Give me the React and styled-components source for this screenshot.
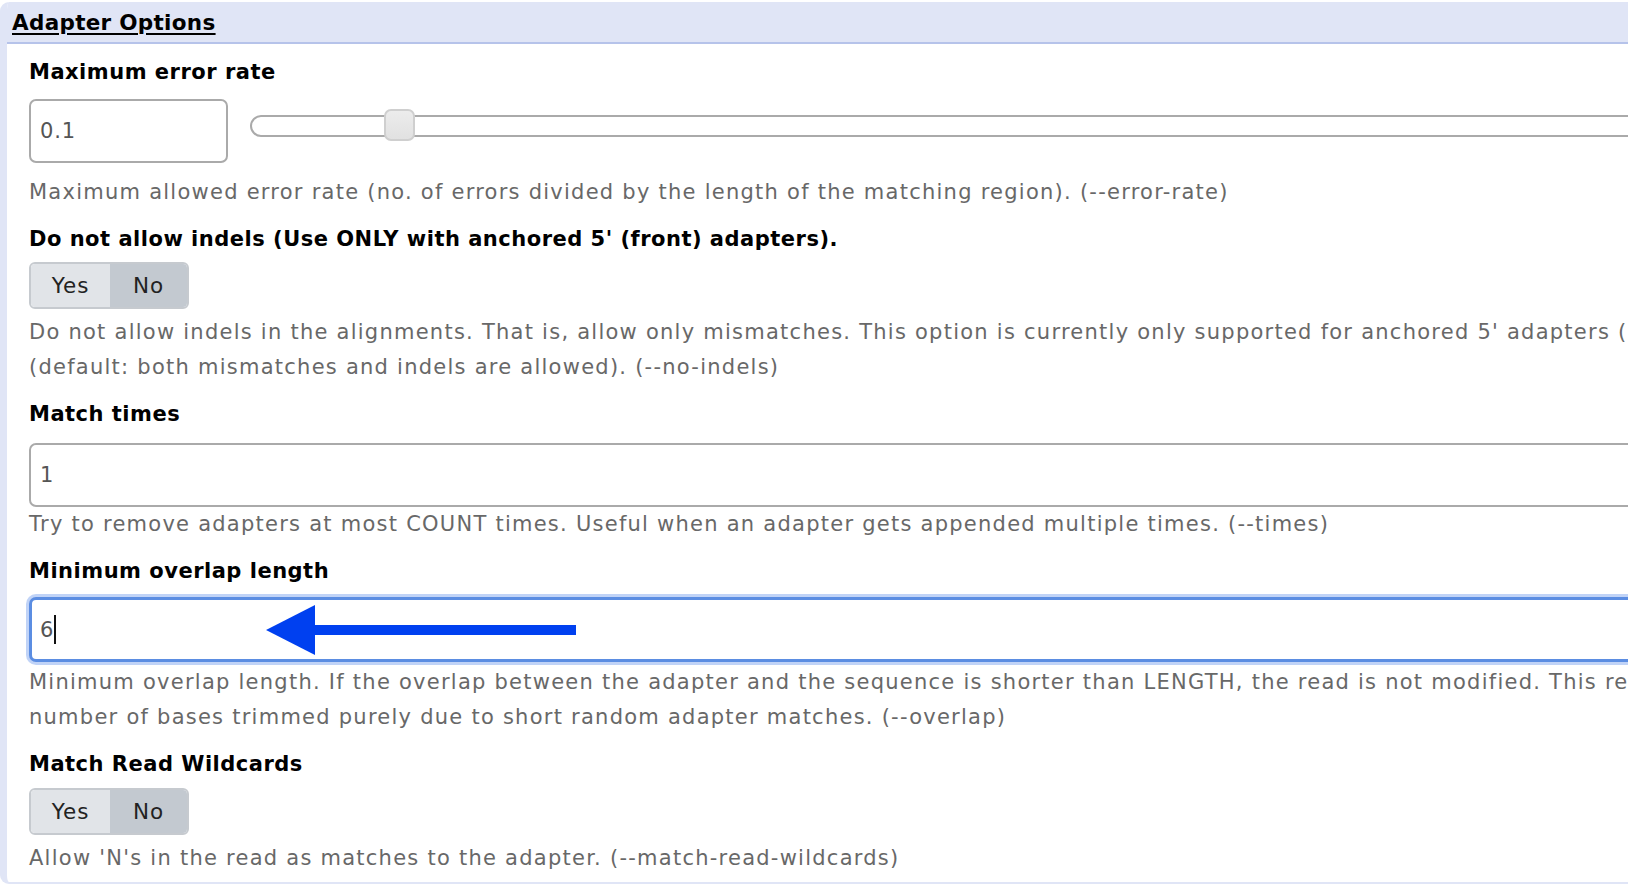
import React from 'react';
import styled, { createGlobalStyle } from 'styled-components';

const Global = createGlobalStyle`
  html, body { margin: 0; padding: 0; background: #fff; overflow: hidden; }
  body { font-family: "DejaVu Sans", "Noto Sans", sans-serif; }
`;

const Page = styled.div`
  width: 1760px;
  padding-top: 2px;
`;

const Panel = styled.section`
  border: 2px solid #e0e5f6;
  border-left-width: 7px;
  border-top: none;
  border-radius: 9px;
  overflow: hidden;
`;

const Header = styled.div`
  height: 40px;
  display: flex;
  align-items: center;
  padding-left: 5px;
  background: #e0e5f6;
  border-bottom: 2px solid #b6c3ea;
`;

const Title = styled.a`
  font-size: 21.5px;
  letter-spacing: 0.3px;
  font-weight: bold;
  color: #000;
  text-decoration: underline;
  text-underline-offset: 3px;
`;

const Body = styled.div`
  padding: 14px 0 6px 22px;
`;

const Field = styled.div`
  margin-bottom: ${p => (p.$last ? 0 : 15)}px;
`;

const Label = styled.div`
  font-size: 21px;
  letter-spacing: 0.5px;
  font-weight: bold;
  line-height: 28px;
  color: #000;
  margin-bottom: ${p => p.$gap ?? 13}px;
`;

const Help = styled.div`
  font-size: 21px;
  letter-spacing: 1.25px;
  line-height: 35px;
  color: #686868;
  white-space: nowrap;
`;

const TextInput = styled.input`
  box-sizing: border-box;
  display: block;
  width: ${p => p.$width || '100%'};
  height: 64px;
  border: 2px solid #aaa;
  border-radius: 7px;
  padding: 0 9px;
  font-family: inherit;
  font-size: 21px;
  letter-spacing: 0.8px;
  color: #555;
  background: #fff;
  outline: none;
`;

const FocusBox = styled.div`
  position: relative;
  box-sizing: border-box;
  height: 65px;
  margin-bottom: 3px;
  border: 3px solid #5b8de2;
  border-radius: 7px;
  box-shadow: 0 0 0 3px rgba(140, 175, 240, 0.55);
  padding: 0 8px;
  display: flex;
  align-items: center;
  font-size: 21px;
  color: #555;
  background: #fff;
`;

const Caret = styled.span`
  display: inline-block;
  width: 2px;
  height: 29px;
  margin-left: 1px;
  background: #111;
`;

const Arrow = styled.svg`
  position: absolute;
  left: 234px;
  top: 4px;
`;

const SliderRow = styled.div`
  display: flex;
  align-items: flex-start;
  gap: 22px;
  margin-bottom: 12px;
`;

const Track = styled.div`
  position: relative;
  flex: 1;
  box-sizing: border-box;
  height: 22px;
  margin-top: 16px;
  border: 2px solid #aaa;
  border-radius: 11px;
  background: #fff;
`;

const Thumb = styled.span`
  position: absolute;
  top: -8px;
  width: 31px;
  height: 32px;
  box-sizing: border-box;
  margin-left: -18px;
  border: 2px solid #cfcfcf;
  border-radius: 7px;
  background: linear-gradient(#ececec, #e1e1e1);
`;

const Toggle = styled.div`
  display: inline-flex;
  box-sizing: border-box;
  height: 47px;
  border: 2px solid #c6cacf;
  border-radius: 6px;
  overflow: hidden;
  margin-bottom: 6px;
  vertical-align: top;
`;

const ToggleOption = styled.span`
  width: ${p => p.$w}px;
  display: flex;
  align-items: center;
  justify-content: center;
  font-size: 21.5px;
  letter-spacing: 1px;
  color: #222;
  background: ${p => (p.$active ? '#c3c9d0' : '#e1e4e8')};
`;

const YesNo = () => (
  <Toggle>
    <ToggleOption $w={79}>Yes</ToggleOption>
    <ToggleOption $w={77} $active>No</ToggleOption>
  </Toggle>
);

export default function App() {
  const errorRate = 0.1;
  const max = 1;
  return (
    <Page>
      <Global />
      <Panel>
        <Header>
          <Title>Adapter Options</Title>
        </Header>
        <Body>
          <Field>
            <Label $gap={13}>Maximum error rate</Label>
            <SliderRow>
              <TextInput $width="199px" defaultValue="0.1" />
              <Track>
                <Thumb style={{ left: `${(errorRate / max) * 100}%` }} />
              </Track>
            </SliderRow>
            <Help>Maximum allowed error rate (no. of errors divided by the length of the matching region). (--error-rate)</Help>
          </Field>

          <Field>
            <Label $gap={9}>Do not allow indels (Use ONLY with anchored 5' (front) adapters).</Label>
            <YesNo />
            <Help>
              Do not allow indels in the alignments. That is, allow only mismatches. This option is currently only supported for anchored 5' adapters ('^ADAPTER')
              <br />
              (default: both mismatches and indels are allowed). (--no-indels)
            </Help>
          </Field>

          <Field>
            <Label $gap={15}>Match times</Label>
            <TextInput defaultValue="1" />
            <Help>Try to remove adapters at most COUNT times. Useful when an adapter gets appended multiple times. (--times)</Help>
          </Field>

          <Field>
            <Label $gap={12}>Minimum overlap length</Label>
            <FocusBox>
              6<Caret />
              <Arrow width="311" height="52" viewBox="0 0 311 52">
                <polygon points="0,26 49,1 49,51" fill="#0040f0" />
                <rect x="48" y="21" width="262" height="10" fill="#0040f0" />
              </Arrow>
            </FocusBox>
            <Help>
              Minimum overlap length. If the overlap between the adapter and the sequence is shorter than LENGTH, the read is not modified. This reduces the
              <br />
              number of bases trimmed purely due to short random adapter matches. (--overlap)
            </Help>
          </Field>

          <Field $last>
            <Label $gap={10}>Match Read Wildcards</Label>
            <YesNo />
            <Help>Allow 'N's in the read as matches to the adapter. (--match-read-wildcards)</Help>
          </Field>
        </Body>
      </Panel>
    </Page>
  );
}
